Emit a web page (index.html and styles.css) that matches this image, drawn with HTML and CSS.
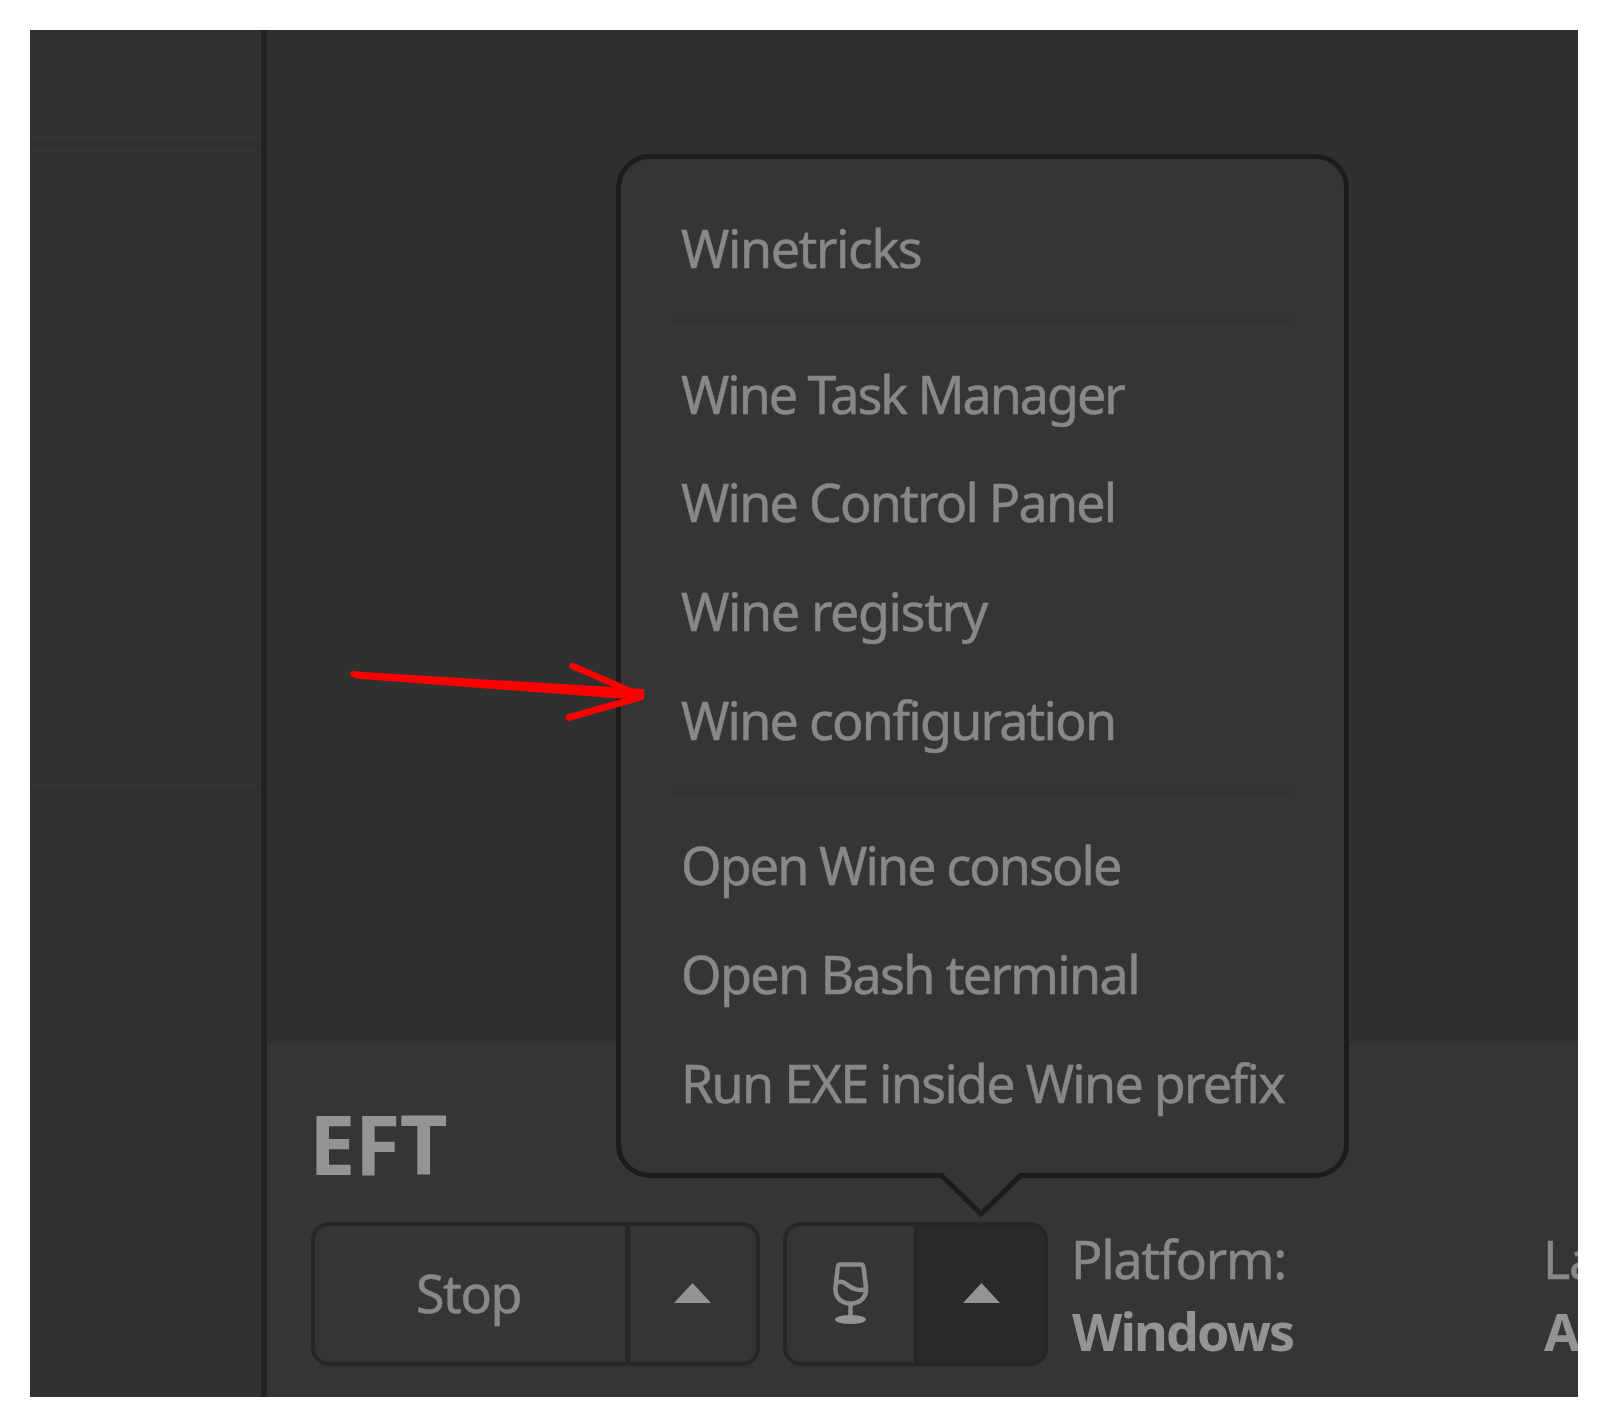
FILE: index.html
```html
<!DOCTYPE html>
<html lang="en">
<head>
<meta charset="utf-8">
<title>Wine menu</title>
<link rel="stylesheet" href="styles.css">
</head>
<body>
<div class="window">
  <aside class="sidebar">
    <div class="side-section side-head"></div>
    <div class="side-section side-list"></div>
    <div class="side-section side-rest"></div>
  </aside>
  <main class="content">
    <div class="library"></div>
    <section class="game-bar">
      <h1 class="game-title">EFT</h1>
      <div class="controls">
        <div class="split-button play">
          <button class="main-part">Stop</button>
          <button class="arrow-part"><svg class="caret" viewBox="0 0 37 20"><path d="M18.5 0 37 20H0Z"/></svg></button>
        </div>
        <div class="split-button runner">
          <button class="main-part">
            <svg class="glass" viewBox="0 0 36 64">
              <path d="M7 3.500H28Q30 3.500 30.400 6L33 26C34 37 26.500 42.500 17.700 42.500S1.500 37 2.500 26L4.800 6Q5 3.500 7 3.500Z"/>
              <path d="M3.500 21.500C15 17.500 14.500 31.500 32.500 28.500M17.500 42V56"/>
              <ellipse cx="17.500" cy="58.500" rx="15.500" ry="4.500"/>
            </svg>
          </button>
          <button class="arrow-part active"><svg class="caret" viewBox="0 0 37 20"><path d="M18.500 0 37 20H0Z"/></svg></button>
        </div>
        <dl class="info platform"><dt>Platform:</dt><dd>Windows</dd></dl>
        <dl class="info last"><dt>La</dt><dd>A</dd></dl>
      </div>
    </section>
  </main>
</div>

<nav class="popover">
  <a class="item winetricks">Winetricks</a>
  <hr>
  <a class="item task-manager">Wine Task Manager</a>
  <a class="item control-panel">Wine Control Panel</a>
  <a class="item registry">Wine registry</a>
  <a class="item configuration">Wine configuration</a>
  <hr class="second">
  <a class="item console">Open Wine console</a>
  <a class="item terminal">Open Bash terminal</a>
  <a class="item run-exe">Run EXE inside Wine prefix</a>
  <svg class="tail" viewBox="0 0 88 48"><path class="tail-fill" d="M2 0H86V5H82L44 42 6 5H2Z"/><path class="tail-line" d="M0 2.500H4.500L44 41 83.500 2.500H88"/></svg>
</nav>

<svg class="pointer" viewBox="0 0 300 64">
  <path class="shaft" d="M3 11Q5 11 12 12L294 29V39L270 38.500 6 18.500Q0 16 0 13 0 11 3 11Z"/>
  <path class="head" d="M222.500 6 280 31M219 57.500 291 37"/>
</svg>
</body>
</html>
```
FILE: styles.css
```css
* { box-sizing: border-box; }
body {
  margin: 0;
  padding: 30px;
  width: 1608px;
  height: 1428px;
  background: #fff;
  color: #888886;
  font-family: "Noto Sans", sans-serif;
  font-size: 52px;
  position: relative;
  overflow: hidden;
}
.window { display: flex; width: 1548px; height: 1367px; overflow: hidden; }
.sidebar {
  display: flex;
  flex-direction: column;
  flex: none;
  width: 237px;
  background: #323232;
  border-right: 6px solid #232323;
}
.side-section { border-bottom: 5px solid #2f2f2f; }
.side-head { height: 117px; }
.side-list { height: 646px; }
.side-rest { flex: 1; border: 0; }
.content { flex: 1; min-width: 0; display: flex; flex-direction: column; background: #303030; }
.library { flex: 1; }
.game-bar { height: 354px; padding: 54px 0 0 44px; background: #353535; }
.game-title { margin: 0 0 0 -2px; height: 125px; font-size: 83px; line-height: 91px; letter-spacing: -0.700px; color: #949492; }
.controls { display: flex; }
.split-button {
  display: flex;
  flex: none;
  height: 144px;
  border: 4.500px solid #272727;
  border-radius: 18px;
  overflow: hidden;
}
.play { width: 449px; margin-right: 23px; }
.runner { width: 265px; }
button {
  display: flex;
  align-items: center;
  justify-content: center;
  padding: 0;
  border: 0;
  background: none;
  color: inherit;
  font: inherit;
  -webkit-text-stroke: inherit;
}
.main-part { flex: 1; padding: 0 3px 3px 0; letter-spacing: -1.400px; }
.arrow-part { width: 131px; border-left: 5px solid #272727; }
.play .arrow-part { padding-right: 2px; }
.runner .arrow-part { width: 130px; border-left-width: 4px; }
.active { background: #2a2a2a; }
.caret { width: 37px; height: 20px; margin-top: -3px; fill: #949492; }
.glass { width: 36px; height: 64px; margin-left: 3px; fill: none; stroke: #8b8b89; stroke-width: 4.500; }
.glass ellipse { fill: #949492; stroke: none; }
.info { flex: none; margin: 0; line-height: 72px; white-space: nowrap; }
.info dt { margin: 1px 0 0 -1px; letter-spacing: -1.250px; }
.info dd { margin: 0; font-weight: 700; letter-spacing: -1.900px; color: #949492; }
.platform { width: 472px; margin-left: 24px; }
.item, .main-part, .info dt { -webkit-text-stroke: 0.500px #888886; }

.popover {
  position: absolute;
  left: 616px;
  top: 154px;
  width: 733px;
  height: 1024px;
  padding: 35px 52px;
  border: 5px solid #1c1c1c;
  border-radius: 34px;
  background: #353535;
}
.item { display: block; height: 108.700px; padding-left: 8px; line-height: 108.700px; white-space: nowrap; }
.winetricks { letter-spacing: -1.420px; }
.task-manager { letter-spacing: -2.040px; }
.control-panel { letter-spacing: -1.770px; }
.registry { letter-spacing: -1.370px; }
.configuration { letter-spacing: -1.770px; }
.console { letter-spacing: -1.920px; }
.terminal { letter-spacing: -1.640px; }
.run-exe { letter-spacing: -1.730px; }
.popover hr { height: 4px; margin: 16px 0 17px; border: 0; background: #313131; }
.popover .second { margin: 17px 0 16px; }
.tail { position: absolute; left: 316px; top: 1014px; width: 88px; height: 48px; }
.tail-fill { fill: #353535; }
.tail-line { fill: none; stroke: #1c1c1c; stroke-width: 5; }

.pointer { position: absolute; left: 350px; top: 660px; width: 300px; height: 64px; fill: #f00; }
.head { fill: none; stroke: #f00; stroke-width: 6.500; stroke-linecap: round; }
```
